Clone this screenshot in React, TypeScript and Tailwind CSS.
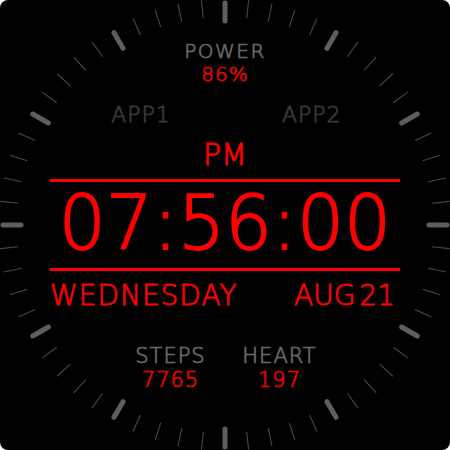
import React from "react";

const FONT = { fontFamily: '"DejaVu Sans", "Liberation Sans", sans-serif' };

function Ticks() {
  const ticks = Array.from({ length: 60 }, (_, i) => i);
  return (
    <svg className="absolute inset-0" width={450} height={450} viewBox="0 0 450 450">
      {ticks.map((i) => {
        const major = i % 5 === 0;
        const a = (i * 6 * Math.PI) / 180;
        const r1 = major ? 204 : 208;
        const r2 = major ? 222 : 226;
        const sx = Math.sin(a);
        const cy = -Math.cos(a);
        return (
          <line
            key={i}
            x1={225 + sx * r1}
            y1={225 + cy * r1}
            x2={225 + sx * r2}
            y2={225 + cy * r2}
            stroke={major ? "#5e5e5e" : "#484848"}
            strokeWidth={major ? 5 : 1.1}
            strokeLinecap={major ? "round" : "butt"}
          />
        );
      })}
    </svg>
  );
}

export default function App() {
  return (
    <div className="w-[450px] h-[450px] bg-white">
      <div className="relative w-[450px] h-[450px] bg-black rounded-[8px] overflow-hidden" style={FONT}>
        <Ticks />
        <div className="relative flex flex-col items-center">
          {/* power */}
          <div className="mt-[41px] h-[20px] text-[20px] leading-[20px] tracking-[1.5px] font-extralight [-webkit-text-stroke:0.7px_#6a6a6a] text-[#6a6a6a]">POWER</div>
          <div className="mt-[3px] h-[20px] text-[20px] leading-[20px] tracking-[1px] font-extralight [-webkit-text-stroke:0.7px_#ee0000] text-[#ee0000]">86%</div>

          {/* app slots */}
          <div className="mt-[20px] h-[22px] w-full flex text-[22px] leading-[22px] tracking-[1px] font-extralight [-webkit-text-stroke:0.8px_#383838] text-[#383838]">
            <div className="w-[282px] text-center">APP1</div>
            <div className="w-[58px] text-center">APP2</div>
          </div>

          <div className="mt-[14px] h-[30px] text-[30px] leading-[30px] font-extralight [-webkit-text-stroke:0.9px_#ff0000] text-[#ff0000]">PM</div>

          {/* time block */}
          <div className="mt-[9px] w-[350px] h-[3px] bg-[#ff0000]" />
          <div className="mt-[4px] h-[74px] text-[74px] leading-[74px] font-extralight [-webkit-text-stroke:1.8px_#ff0000] text-[#ff0000]">07:56:00</div>
          <div className="mt-[8px] w-[350px] h-[3px] bg-[#ff0000]" />

          <div className="mt-[11px] w-[350px] h-[28px] flex justify-between pr-[5px] text-[28px] leading-[28px] font-extralight [-webkit-text-stroke:0.8px_#ff0000] text-[#ff0000]">
            <span className="tracking-[1px]">WEDNESDAY</span>
            <span className="flex gap-[4px]">
              <span>AUG</span>
              <span>21</span>
            </span>
          </div>

          {/* stats */}
          <div className="mt-[36px] flex gap-[9px] text-[21px] leading-[21px] font-extralight">
            <div className="w-[100px] flex flex-col items-center">
              <span className="text-[#6a6a6a] [-webkit-text-stroke:0.7px_#6a6a6a] tracking-[1px]">STEPS</span>
              <span className="mt-[3px] text-[#ee0000] [-webkit-text-stroke:0.7px_#ee0000] tracking-[1px]">7765</span>
            </div>
            <div className="w-[100px] flex flex-col items-center">
              <span className="text-[#6a6a6a] [-webkit-text-stroke:0.7px_#6a6a6a] tracking-[1px]">HEART</span>
              <span className="mt-[3px] text-[#ee0000] [-webkit-text-stroke:0.7px_#ee0000] tracking-[1px]">197</span>
            </div>
          </div>
        </div>
      </div>
    </div>
  );
}
